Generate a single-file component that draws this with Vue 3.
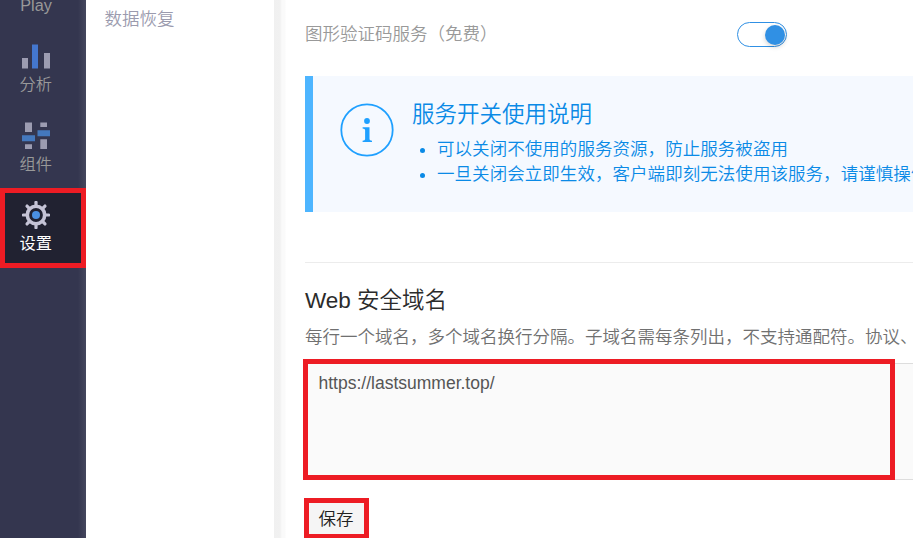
<script setup>
import { ref } from 'vue'

const domains = ref('https://lastsummer.top/')
const notes = [
  '可以关闭不使用的服务资源，防止服务被盗用',
  '一旦关闭会立即生效，客户端即刻无法使用该服务，请谨慎操作',
]
const teeth = [0, 45, 90, 135, 180, 225, 270, 315]
</script>

<template>
  <div class="page">
    <nav class="sidebar">
      <a class="nav-item play"><span>Play</span></a>
      <a class="nav-item analysis">
        <svg class="icon" width="28" height="28" viewBox="0 0 28 28">
          <path d="M0 16h6v10.500H0zM22 11h6v15.500h-6z" fill="#9c9cb1" />
          <path d="M10 2.500h6v24h-6z" fill="#4477cf" />
        </svg>
        <span>分析</span>
      </a>
      <a class="nav-item component">
        <svg class="icon" width="28" height="28" viewBox="0 0 28 28">
          <path d="M3 0.5h7v9.5H3zM3 22.3h7V27H3zM18.3 0.5h6.7v4.5h-6.7zM18.3 17.3h6.7V27h-6.7z" fill="#9c9cb1" />
          <path d="M0 13.2h13v6H0zM15.5 8.2H28v6H15.500z" fill="#4478bd" />
        </svg>
        <span>组件</span>
      </a>
      <a class="nav-item active">
        <svg class="icon" width="28" height="28" viewBox="0 0 28 28">
          <g stroke="#c5c4d6" fill="none">
            <circle cx="14" cy="14" r="8.700" stroke-width="3.600" />
            <path v-for="t in teeth" :key="t" d="M14 4.500V1.300" stroke-width="3.200" stroke-linecap="round" :transform="`rotate(${t} 14 14)`" />
          </g>
          <circle cx="14" cy="14" r="4" fill="#4a90e2" />
        </svg>
        <span>设置</span>
      </a>
    </nav>

    <aside class="submenu"><a>数据恢复</a></aside>

    <main class="content">
      <div class="service">
        <span class="service-name">图形验证码服务（免费）</span>
        <span class="switch" role="switch" aria-checked="true"><i class="knob"></i></span>
      </div>

      <section class="notice">
        <svg class="info" width="54" height="54" viewBox="0 0 54 54">
          <circle cx="27" cy="27" r="25.700" fill="none" stroke="#1fa0ff" stroke-width="1.800" />
          <circle cx="27" cy="18" r="2.900" fill="#1fa0ff" />
          <path d="M22.600 24.200H29.500V36.200Q29.500 37.500 32 37.700V39H22.600V37.700Q25.100 37.500 25.100 36.200V27Q25.100 25.700 22.600 25.500Z" fill="#1fa0ff" />
        </svg>
        <div class="notice-body">
          <h3>服务开关使用说明</h3>
          <ul>
            <li v-for="note in notes" :key="note">{{ note }}</li>
          </ul>
        </div>
      </section>

      <section class="domains">
        <h2>Web 安全域名</h2>
        <p>每行一个域名，多个域名换行分隔。子域名需每条列出，不支持通配符。协议、</p>
        <div class="field">
          <textarea v-model="domains" spellcheck="false"></textarea>
          <div class="mark"></div>
        </div>
        <button type="button">保存</button>
      </section>
    </main>
  </div>
</template>

<style>
body {
  margin: 0;
  overflow: hidden;
}
</style>

<style scoped>
.page {
  display: flex;
  width: 100%;
  height: 538px;
  overflow: hidden;
  background: #fff;
  font-family: "Liberation Sans", "Noto Sans CJK SC", sans-serif;
  font-size: 17.5px;
  font-weight: 350;
}
.page * {
  box-sizing: border-box;
}
.sidebar {
  flex: 0 0 86px;
  background: linear-gradient(to right, #34364f 78px, #45475e 86px);
}
.nav-item {
  display: flex;
  flex-direction: column;
  align-items: flex-start;
  padding-left: 19.500px;
  color: #999;
  font-size: 16.25px;
  line-height: 24px;
}
.icon {
  display: block;
  margin-left: 2.500px;
}
.play {
  height: 42px;
  padding-left: 20.250px;
}
.play span {
  margin-top: -7px;
}
.analysis {
  height: 79px;
}
.analysis span {
  margin-top: 2px;
}
.component {
  height: 67px;
}
.component .icon {
  margin-top: 1px;
}
.component span {
  margin-top: 2px;
}
.active {
  height: 80px;
  padding: 8px 0 0 14.500px;
  border: 5px solid #ed1c24;
  background: #212231;
  color: #fff;
  font-weight: 400;
}
.active span {
  margin-top: 2px;
}
.submenu {
  flex: 0 0 188px;
  padding: 5px 0 0 18.500px;
  color: #9b9bae;
  line-height: 28px;
}
.content {
  flex: 1;
  min-width: 0;
  padding: 20px 0 0 31px;
  background: linear-gradient(to right, #f0f0f0 0, #f1f1f1 6px, #fafafa 8px, #fafafa 11px, #fff 12px);
  white-space: nowrap;
}
.service {
  display: flex;
  align-items: center;
  height: 28px;
  color: #999;
}
.service-name {
  width: 432px;
  margin-top: -3px;
}
.switch {
  display: flex;
  justify-content: flex-end;
  align-items: center;
  width: 50px;
  height: 25px;
  padding-right: 1px;
  margin-top: 1px;
  border: 1px solid #3090e4;
  border-radius: 13px;
  background: #fff;
}
.knob {
  width: 20px;
  height: 20px;
  margin-top: 1px;
  border-radius: 50%;
  background: #3090e4;
  box-shadow: 0 2px 5px rgba(0, 0, 0, .18);
}
.notice {
  display: flex;
  height: 136px;
  margin-top: 28px;
  padding: 23px 0 0 27px;
  border-left: 8px solid #4db5ff;
  background: #f5f9ff;
  color: #0a8ae6;
  overflow: hidden;
}
.info {
  flex: none;
  margin-top: 4px;
}
.notice-body {
  margin-left: 18px;
}
h3,
h2 {
  margin: 0;
  font-size: 22.5px;
  font-weight: 350;
  line-height: 32px;
}
ul {
  margin: 6px 0 0;
  padding: 0;
  list-style: none;
}
li {
  display: flex;
  align-items: center;
  height: 25px;
  line-height: 25px;
  letter-spacing: .05px;
}
li::before {
  content: "";
  flex: none;
  width: 5px;
  height: 5px;
  margin: 2px 12px 0 8px;
  border-radius: 50%;
  background: #0a8ae6;
}
.domains {
  margin-top: 50px;
  padding-top: 22px;
  border-top: 1px solid #ececec;
}
h2 {
  color: #2b2b2b;
}
p {
  margin: 6px 0 0;
  color: #707070;
  line-height: 28px;
}
.field {
  position: relative;
  height: 117px;
  margin-top: 12px;
}
textarea {
  display: block;
  width: 620px;
  height: 117px;
  margin: 0;
  padding: 7px 12.500px;
  border: 1px solid #ddd;
  border-radius: 0;
  outline: 0;
  background: #fafafa;
  color: #555;
  font: 17.5px/25px "Liberation Sans", "Noto Sans CJK SC", sans-serif;
  resize: none;
}
.mark {
  position: absolute;
  left: -2px;
  top: -4px;
  width: 592px;
  height: 121px;
  border: 5px solid #ed1c24;
  pointer-events: none;
}
button {
  display: block;
  width: 65px;
  height: 41px;
  margin: 18px 0 0 -1px;
  padding: 0 1px 0 0;
  border: 5px solid #ed1c24;
  border-radius: 0;
  background: #f5f5f5;
  color: #222;
  font: 350 17.5px/30px "Liberation Sans", "Noto Sans CJK SC", sans-serif;
}
</style>
